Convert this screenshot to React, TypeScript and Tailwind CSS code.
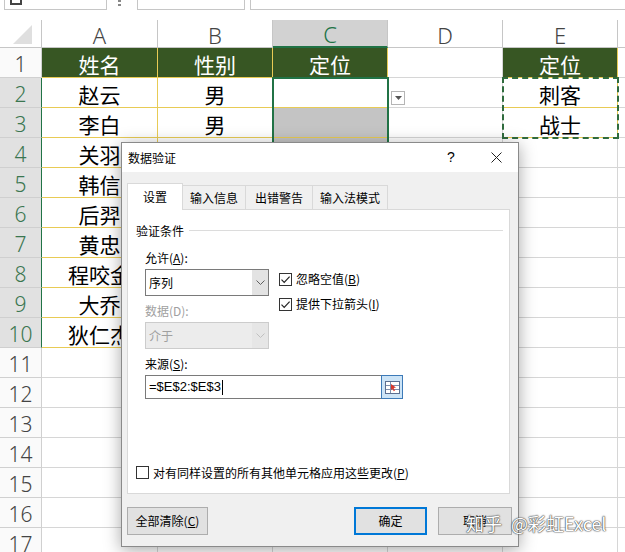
import React from "react";

const cjk = "font-['Noto_Sans_CJK_SC','Microsoft_YaHei',sans-serif]";

const data: string[][] = [
  ["姓名", "性别", "定位", "", "定位"],
  ["赵云", "男", "", "", "刺客"],
  ["李白", "男", "", "", "战士"],
  ["关羽", "男", "", "", ""],
  ["韩信", "男", "", "", ""],
  ["后羿", "男", "", "", ""],
  ["黄忠", "男", "", "", ""],
  ["程咬金", "男", "", "", ""],
  ["大乔", "女", "", "", ""],
  ["狄仁杰", "男", "", "", ""],
];

const letters = ["A", "B", "C", "D", "E"];

function Check({ checked }: { checked?: boolean }) {
  return (
    <span className="w-[13px] h-[13px] border border-[#333333] bg-white flex items-center justify-center shrink-0">
      {checked && (
        <svg width="11" height="11" viewBox="0 0 11 11">
          <path d="M1.5 5.6 L4.2 8.3 L9.6 2.6" fill="none" stroke="#222" strokeWidth="1.2" />
        </svg>
      )}
    </span>
  );
}

function Chevron({ color = "#606060" }: { color?: string }) {
  return (
    <svg width="9" height="5" viewBox="0 0 9 5">
      <path d="M0.5 0.5 L4.5 4.5 L8.5 0.5" fill="none" stroke={color} />
    </svg>
  );
}

function cellClass(r: number, c: number) {
  const head = r === 1 && (c <= 2 || c === 4);
  const inTable = (c <= 2 && r <= 10) || (c === 4 && r <= 3);
  const bg = head
    ? "bg-[#375623] text-white"
    : c === 2 && r >= 3 && r <= 10
    ? "bg-[#c4c4c4] text-black"
    : "bg-white text-black";
  const border = inTable ? "border-[#e8cb55]" : "border-[#d6d6d6]";
  return `${bg} ${border} border-r border-b flex items-center justify-center pt-[3px] text-[21px] leading-none`;
}

export default function App() {
  const rows = Array.from({ length: 17 }, (_, i) => i + 1);
  return (
    <div className={`w-[625px] h-[552px] relative overflow-hidden bg-white ${cjk}`}>
      {/* formula bar, cut off at the top */}
      <div className="h-[20px] flex items-start">
        <div className="ml-[4px] w-[103px] h-[10px] border border-t-0 border-[#c6c6c6] flex items-start pl-[5px]">
          <div className="w-[12px] h-[5px] border-x-2 border-b-2 border-[#444]" />
        </div>
        <div className="ml-[11px] w-[3px] h-[6px] flex flex-col justify-between">
          <div className="w-[3px] h-[2px] bg-[#888]" />
          <div className="w-[3px] h-[2px] bg-[#888]" />
        </div>
        <div className="ml-[16px] w-[108px] h-[10px] border border-t-0 border-[#c6c6c6]" />
        <div className="ml-[5px] flex-1 h-[10px] border border-t-0 border-r-0 border-[#c6c6c6]" />
      </div>

      {/* sheet */}
      <div className="relative">
        <div className="grid grid-cols-[42px_116px_115px_115px_115px_115px_1fr] auto-rows-[30px] [grid-template-rows:28px]">
          <div className="h-[28px] bg-white border-r border-b border-[#c6c6c6] flex items-end justify-end pr-[9px] pb-[3px]">
            <svg width="19" height="19" viewBox="0 0 19 19">
              <path d="M19 0 L19 19 L0 19 Z" fill="#dfdfdf" />
            </svg>
          </div>
          {letters.map((l, c) => (
            <div
              key={l}
              className={`h-[28px] flex items-center justify-center pt-[2px] text-[22px] font-light leading-none font-['Noto_Sans',sans-serif] border-r ${
                c === 2
                  ? "bg-[#d2d2d2] text-[#217346] border-b-2 border-b-[#217346] border-r-[#c6c6c6]"
                  : "bg-white text-[#444] border-b border-[#c6c6c6]"
              }`}
            >
              {l}
            </div>
          ))}
          <div className="h-[28px] bg-white border-b border-[#c6c6c6]" />

          {rows.map((r) => (
            <React.Fragment key={r}>
              <div
                className={`flex items-center justify-center pt-[4px] text-[21px] font-light leading-none font-['Noto_Sans',sans-serif] border-b border-r ${
                  r >= 2 && r <= 10
                    ? "bg-[#e1e1e1] text-[#3a7650] border-b-[#cfcfcf] border-r-[#217346]"
                    : "bg-[#fafafa] text-[#444] border-[#d0d0d0]"
                }`}
              >
                {r}
              </div>
              {letters.map((_, c) => (
                <div key={c} className={cellClass(r, c)}>
                  {r <= 10 ? data[r - 1][c] : ""}
                </div>
              ))}
              <div className="border-b border-[#d6d6d6]" />
            </React.Fragment>
          ))}
        </div>

        {/* selection C2:C10 */}
        <div className="absolute left-[272px] top-[57px] w-[117px] h-[272px] border-2 border-[#217346]" />
        {/* copy marquee E2:E3 */}
        <div className="absolute left-[502px] top-[57px] w-[117px] h-[62px] border-2 border-dashed border-[#2f6b3d]" />
        {/* validation dropdown button */}
        <div className="absolute left-[391px] top-[71px] w-[14px] h-[14px] border border-[#b5b5b5] bg-white flex items-center justify-center">
          <svg width="7" height="4" viewBox="0 0 7 4">
            <path d="M0 0 L7 0 L3.5 4 Z" fill="#555" />
          </svg>
        </div>
      </div>

      {/* data validation dialog */}
      <div className="absolute left-[121px] top-[142px] w-[398px] h-[405px] bg-[#f0f0f0] border border-[#8a8a8a] shadow-[0_3px_16px_rgba(0,0,0,0.35)] flex flex-col text-[12px] text-black">
        <div className="h-[29px] bg-white flex items-center pl-[6px] shrink-0">
          <span className="flex-1">数据验证</span>
          <span className="w-[20px] text-center text-[14px] font-['Liberation_Sans',sans-serif]">?</span>
          <span className="w-[20px] ml-[25px] mr-[12px] flex items-center justify-center">
            <svg width="11" height="11" viewBox="0 0 11 11">
              <path d="M0.5 0.5 L10.5 10.5 M10.5 0.5 L0.5 10.5" stroke="#222" strokeWidth="1" />
            </svg>
          </span>
        </div>

        <div className="flex-1 flex flex-col pl-[5px] pr-[8px] pt-[11px]">
          {/* tabs */}
          <div className="h-[27px] flex items-end shrink-0">
            <div className="relative z-10 h-[27px] w-[56px] bg-white border border-b-0 border-[#d9d9d9] flex items-center justify-center">
              设置
            </div>
            <div className="h-[25px] w-[63px] border border-l-0 border-b-0 border-[#d9d9d9] flex items-center justify-center">
              输入信息
            </div>
            <div className="h-[25px] w-[67px] border border-l-0 border-b-0 border-[#d9d9d9] flex items-center justify-center">
              出错警告
            </div>
            <div className="h-[25px] w-[75px] border border-l-0 border-b-0 border-[#d9d9d9] flex items-center justify-center">
              输入法模式
            </div>
          </div>

          {/* panel */}
          <div className="-mt-px h-[285px] bg-white border border-[#d9d9d9] flex flex-col shrink-0">
            <div className="mt-[12px] h-[17px] pl-[8px] pr-[6px] flex items-center gap-[5px]">
              <span>验证条件</span>
              <div className="flex-1 h-px bg-[#dcdcdc]" />
            </div>

            <div className="mt-[10px] h-[17px] pl-[17px] flex items-center">
              允许(<u>A</u>):
            </div>

            <div className="pl-[17px] flex gap-[10px]">
              <div className="w-[124px] flex flex-col">
                <div className="mt-[3px] h-[27px] border border-[#7a7a7a] bg-white flex items-stretch">
                  <span className="flex-1 flex items-center pl-[3px]">序列</span>
                  <span className="w-[16px] bg-[#e3e3e3] flex items-center justify-center">
                    <Chevron />
                  </span>
                </div>
                <div className="mt-[6px] h-[17px] flex items-center text-[#a0a0a0]">数据(D):</div>
                <div className="mt-[3px] h-[27px] border border-[#cccccc] bg-[#ececec] flex items-stretch text-[#a0a0a0]">
                  <span className="flex-1 flex items-center pl-[3px]">介于</span>
                  <span className="w-[16px] bg-[#e6e6e6] flex items-center justify-center">
                    <Chevron color="#c0c0c0" />
                  </span>
                </div>
              </div>
              <div className="flex flex-col">
                <div className="mt-[6px] h-[14px] flex items-center gap-[4px]">
                  <Check checked />
                  <span>
                    忽略空值(<u>B</u>)
                  </span>
                </div>
                <div className="mt-[11px] h-[14px] flex items-center gap-[4px]">
                  <Check checked />
                  <span>
                    提供下拉箭头(<u>I</u>)
                  </span>
                </div>
              </div>
            </div>

            <div className="mt-[6px] h-[17px] pl-[17px] flex items-center">
              来源(<u>S</u>):
            </div>
            <div className="mt-[3px] ml-[17px] w-[258px] h-[24px] flex">
              <div className="flex-1 border border-[#7a7a7a] border-r-0 bg-white flex items-center pl-[3px] text-[13px] font-['Liberation_Sans',sans-serif]">
                =$E$2:$E$3
                <span className="ml-[1px] w-px h-[15px] bg-black" />
              </div>
              <div className="w-[22px] border border-[#3d7ab8] bg-[#cce4f7] flex items-center justify-center">
                <svg width="15" height="13" viewBox="0 0 15 13">
                  <rect x="0.5" y="0.5" width="14" height="12" fill="#ffffff" stroke="#5b6f92" />
                  <path d="M1 4.5 H14 M1 8.5 H14 M5.5 1 V12" stroke="#7d8fae" />
                  <path d="M6 3 L11 6.5 L8.6 7 L10 9.6 L8.8 10.3 L7.4 7.7 L6 9.3 Z" fill="#d7372c" />
                </svg>
              </div>
            </div>

            <div className="mt-auto mb-[12px] h-[17px] pl-[8px] flex items-center gap-[4px]">
              <Check />
              <span>
                对有同样设置的所有其他单元格应用这些更改(<u>P</u>)
              </span>
            </div>
          </div>

          {/* buttons */}
          <div className="mt-[13px] -mr-[2px] flex">
            <div className="w-[81px] h-[28px] bg-[#e1e1e1] border border-[#adadad] flex items-center justify-center">
              全部清除(<u>C</u>)
            </div>
            <div className="flex-1" />
            <div className="w-[73px] h-[28px] bg-[#e1e1e1] border-2 border-[#0078d7] flex items-center justify-center">
              确定
            </div>
            <div className="ml-[11px] w-[74px] h-[28px] bg-[#e1e1e1] border border-[#adadad] flex items-center justify-center">
              取消
            </div>
          </div>
        </div>
      </div>

      {/* watermark */}
      <div className="absolute left-[466px] top-[511px] flex items-center gap-[9px] text-[18px] text-white [text-shadow:0_0_1px_#444,0_0_1px_#444,0_0_2px_#666] leading-[24px]">
        <span>知乎</span>
        <span>@彩虹Excel</span>
      </div>
    </div>
  );
}
